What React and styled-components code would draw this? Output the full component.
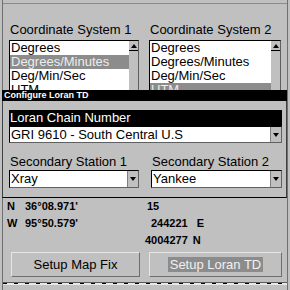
import React from 'react';
import styled, { createGlobalStyle } from 'styled-components';

const GlobalStyle = createGlobalStyle`
  body {
    margin: 0;
    background: #c0c0c0;
  }
`;

const Screen = styled.div`
  position: relative;
  width: 290px;
  height: 290px;
  overflow: hidden;
  background: #c0c0c0;
  font-family: "Liberation Sans", Arial, sans-serif;
  color: #000;
`;

const Frame = styled.div`
  box-sizing: border-box;
  height: 290px;
  margin: 0 2px;
  border-left: 1px solid #707070;
  border-right: 1px solid #707070;
  display: flex;
  flex-direction: column;
`;

const TopRule = styled.div`
  margin-top: 3px;
  height: 1px;
  background: #8a8a8a;
`;

const Panels = styled.div`
  display: grid;
  grid-template-columns: 130px 132px;
  column-gap: 10px;
  padding-left: 6px;
  margin-top: 18px;
`;

const Label = styled.div`
  font-size: 13px;
  line-height: 15px;
  padding-left: 1px;
  white-space: nowrap;
`;

/* the dialog covers the lower part of the lists, so they are cut at its top */
const ListBox = styled.div`
  margin-top: 3px;
  height: 50px;
  overflow: hidden;
  display: flex;
  background: #fff;
  border-top: 1px solid #000;
  border-left: 1px solid #000;
  border-right: 1px solid #606060;
`;

const Items = styled.div`
  flex: 1;
`;

const Item = styled.div`
  height: 14px;
  font-size: 13px;
  line-height: 14px;
  padding-left: 1px;
  white-space: nowrap;
  background: ${p => (p.$selected ? '#8c8c8c' : 'transparent')};
  color: ${p => (p.$selected ? '#ececec' : '#000')};
`;

const ScrollBar = styled.div`
  width: 9px;
  background: #c0c0c0;
`;

const ScrollButton = styled.div`
  height: 8px;
  margin-top: 1px;
  border-bottom: 1px solid #000;
  display: flex;
  align-items: center;
  justify-content: center;
  &::after {
    content: '';
    border-left: 3px solid transparent;
    border-right: 3px solid transparent;
    border-bottom: 4px solid #000;
  }
`;

const Readouts = styled.div`
  display: grid;
  grid-template-columns: 138px 1fr;
  padding-left: 4px;
  margin-top: 107px;
  font-size: 11px;
  font-weight: bold;
  line-height: 17px;
`;

const Cell = styled.div`
  height: 17px;
  white-space: nowrap;
  padding-left: ${p => p.$pad || 0}px;
`;

const Hemi = styled.span`
  display: inline-block;
  width: 18px;
`;

const Suffix = styled.span`
  margin-left: ${p => p.$gap}px;
`;

const Buttons = styled.div`
  display: grid;
  grid-template-columns: 129px 133px;
  column-gap: 9px;
  padding-left: 8px;
  margin-top: 3px;
`;

const Button = styled.div`
  box-sizing: border-box;
  height: 25px;
  display: flex;
  align-items: center;
  justify-content: center;
  font-size: 13px;
  background: #c0c0c0;
  border-top: 1px solid #e6e6e6;
  border-left: 1px solid #e6e6e6;
  border-right: 1px solid #6e6e6e;
  border-bottom: 1px solid #6e6e6e;
`;

const ButtonText = styled.span`
  padding: 0 2px;
  line-height: 15px;
  background: ${p => (p.$focused ? '#8c8c8c' : 'transparent')};
  color: ${p => (p.$focused ? '#f0f0f0' : '#000')};
`;

const BottomRule = styled.div`
  margin-top: auto;
  margin-bottom: 5px;
  height: 2px;
  border-top: 1px solid #5a5a5a;
  background: #e8e8e8;
  background-image: repeating-linear-gradient(90deg, #000 0 4px, transparent 4px 11px);
  background-size: 100% 1px;
  background-repeat: no-repeat;
`;

const Dialog = styled.div`
  position: absolute;
  top: 90px;
  left: 2px;
  width: 285px;
  height: 108px;
  box-sizing: border-box;
  display: flex;
  flex-direction: column;
  background: #c0c0c0;
`;

const TitleBar = styled.div`
  height: 11px;
  background: #000;
  color: #fff;
  font-size: 9px;
  font-weight: bold;
  line-height: 11px;
  padding-left: 2px;
  white-space: nowrap;
`;

const DialogBody = styled.div`
  flex: 1;
  border-left: 1px solid #404040;
  border-right: 1px solid #404040;
  border-bottom: 1px solid #000;
  padding: 9px 4px 0 6px;
`;

const ChainHeader = styled.div`
  background: #000;
  color: #fff;
  font-size: 13px;
  line-height: 16px;
  padding-left: 1px;
`;

const Select = styled.div`
  box-sizing: border-box;
  height: ${p => p.$height}px;
  display: flex;
  background: #fff;
  border: 1px solid #000;
  border-right-color: #606060;
  border-bottom-color: #606060;
`;

const SelectText = styled.div`
  flex: 1;
  font-size: 13px;
  line-height: 15px;
  padding-left: 1px;
  white-space: nowrap;
  overflow: hidden;
`;

const DropArrow = styled.div`
  width: 10px;
  background: #c0c0c0;
  border-left: 1px solid #808080;
  display: flex;
  align-items: center;
  justify-content: center;
  &::after {
    content: '';
    border-left: 3px solid transparent;
    border-right: 3px solid transparent;
    border-top: 4px solid #000;
  }
`;

const Stations = styled.div`
  display: grid;
  grid-template-columns: 130px 1fr;
  column-gap: 12px;
  margin-top: 11px;
`;

const StationSelect = styled(Select)`
  margin-top: 1px;
`;

const coordinateLists = [
  { title: 'Coordinate System 1', selected: 'Degrees/Minutes' },
  { title: 'Coordinate System 2', selected: 'UTM' },
];

const formats = ['Degrees', 'Degrees/Minutes', 'Deg/Min/Sec', 'UTM'];

export default function App() {
  return (
    <Screen>
      <GlobalStyle />
      <Frame>
        <TopRule />
        <Panels>
          {coordinateLists.map(list => (
            <div key={list.title}>
              <Label>{list.title}</Label>
              <ListBox>
                <Items>
                  {formats.map(f => (
                    <Item key={f} $selected={f === list.selected}>{f}</Item>
                  ))}
                </Items>
                <ScrollBar>
                  <ScrollButton />
                </ScrollBar>
              </ListBox>
            </div>
          ))}
        </Panels>

        <Readouts>
          <Cell><Hemi>N</Hemi>36°08.971'</Cell>
          <Cell $pad={2}>15</Cell>
          <Cell><Hemi>W</Hemi>95°50.579'</Cell>
          <Cell $pad={6}>244221<Suffix $gap={9}>E</Suffix></Cell>
          <Cell />
          <Cell>4004277<Suffix $gap={5}>N</Suffix></Cell>
        </Readouts>

        <Buttons>
          <Button><ButtonText>Setup Map Fix</ButtonText></Button>
          <Button><ButtonText $focused>Setup Loran TD</ButtonText></Button>
        </Buttons>

        <BottomRule />
      </Frame>

      <Dialog>
        <TitleBar>Configure Loran TD</TitleBar>
        <DialogBody>
          <ChainHeader>Loran Chain Number</ChainHeader>
          <Select $height={17}>
            <SelectText>GRI 9610 - South Central U.S</SelectText>
            <DropArrow />
          </Select>
          <Stations>
            <div>
              <Label>Secondary Station 1</Label>
              <StationSelect $height={18}>
                <SelectText>Xray</SelectText>
                <DropArrow />
              </StationSelect>
            </div>
            <div>
              <Label>Secondary Station 2</Label>
              <StationSelect $height={18}>
                <SelectText>Yankee</SelectText>
                <DropArrow />
              </StationSelect>
            </div>
          </Stations>
        </DialogBody>
      </Dialog>
    </Screen>
  );
}
